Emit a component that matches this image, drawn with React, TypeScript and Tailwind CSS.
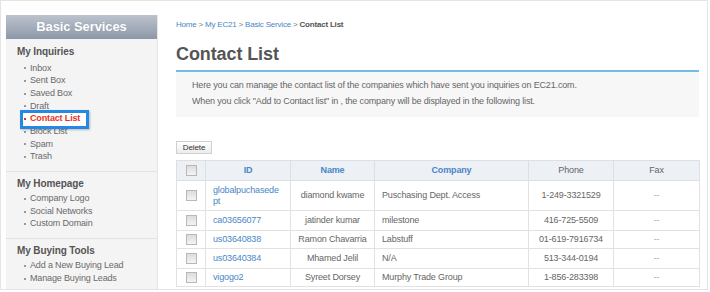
import React from "react";

const Bullet = ({ red }: { red?: boolean }) => (
  <span className={`inline-block w-[2px] h-[2px] mr-[4px] shrink-0 ${red ? "bg-[#e8321e]" : "bg-[#999]"}`} />
);

function Section({
  title,
  items,
  last,
  pt,
  mt,
}: {
  title: string;
  items: string[];
  last?: boolean;
  pt: string;
  mt: string;
}) {
  return (
    <div className={`${pt} pb-[7px] ${last ? "" : "border-b border-[#e2e2e2]"}`}>
      <div className="pl-[11px] text-[10px] leading-[13px] font-bold text-[#555] tracking-[-0.1px]">{title}</div>
      <ul className={mt}>
        {items.map((it) =>
          it === "Contact List" ? (
            <li key={it} className="relative flex items-center pl-[18px] h-[12.7px] text-[9px] tracking-[-0.15px]">
              <span className="absolute left-[14px] top-[-3px] w-[69px] h-[19px] border-[3px] border-[#2589e3] bg-white shadow-[1px_1px_2px_rgba(0,0,0,0.25)]" />
              <span className="relative flex items-center text-[#e8321e] font-bold">
                <Bullet red />
                {it}
              </span>
            </li>
          ) : (
            <li key={it} className="flex items-center pl-[18px] h-[12.7px] text-[9px] text-[#6a6a6a] tracking-[-0.15px]">
              <Bullet />
              {it}
            </li>
          )
        )}
      </ul>
    </div>
  );
}

const Check = () => (
  <span className="inline-block w-[11px] h-[11px] border border-[#b8b8b8] bg-gradient-to-b from-[#dcdcdc] to-[#f4f4f4] align-middle" />
);

const rows = [
  { id: "globalpuchasedept", name: "diamond kwame", company: "Puschasing Dept. Access", phone: "1-249-3321529", h: "h-[30px]" },
  { id: "ca03656077", name: "jatinder kumar", company: "milestone", phone: "416-725-5509", h: "h-[20px]" },
  { id: "us03640838", name: "Ramon Chavarria", company: "Labstuff", phone: "01-619-7916734", h: "h-[18px]" },
  { id: "us03640384", name: "Mhamed Jelil", company: "N/A", phone: "513-344-0194", h: "h-[20px]" },
  { id: "vigogo2", name: "Syreet Dorsey", company: "Murphy Trade Group", phone: "1-856-283398", h: "h-[18px]" },
];

export default function App() {
  return (
    <div className="w-[710px] h-[292px] bg-white font-['Liberation_Sans',Arial,sans-serif] overflow-hidden">
      <div className="w-[708px] h-[290px] border border-[#e4e4e4] flex pl-[5px] pt-[14px]">
        {/* Sidebar */}
        <aside className="w-[152px] shrink-0 bg-[#f4f4f4] border-r border-[#e6e6e6] self-stretch">
          <div className="h-[24px] bg-gradient-to-b from-[#bcc3ce] to-[#8d98a8] flex items-center justify-center">
            <span className="text-white font-bold text-[13px] tracking-[-0.1px] [text-shadow:0_0_1px_rgba(0,0,0,0.15)]">Basic Services</span>
          </div>
          <Section
            title="My Inquiries"
            items={["Inbox", "Sent Box", "Saved Box", "Draft", "Contact List", "Block List", "Spam", "Trash"]}
            pt="pt-[6px]"
            mt="mt-[4px]"
          />
          <Section title="My Homepage" items={["Company Logo", "Social Networks", "Custom Domain"]} pt="pt-[5px]" mt="mt-[3px]" />
          <Section title="My Buying Tools" items={["Add a New Buying Lead", "Manage Buying Leads"]} last pt="pt-[5px]" mt="mt-[3px]" />
        </aside>

        {/* Main */}
        <main className="ml-[18px] w-[523px] -mt-[14px] pt-[18px]">
          <div className="text-[8px] leading-[11px] tracking-[-0.2px]">
            <span className="text-[#4a86c6]">Home</span>
            <span className="text-[#777]"> &gt; </span>
            <span className="text-[#4a86c6]">My EC21</span>
            <span className="text-[#777]"> &gt; </span>
            <span className="text-[#4a86c6]">Basic Service</span>
            <span className="text-[#777]"> &gt; </span>
            <span className="text-[#555] font-bold">Contact List</span>
          </div>
          <h1 className="mt-[13px] text-[18px] leading-[22px] font-bold text-[#555] tracking-[-0.1px]">Contact List</h1>
          <div className="mt-[5px] border-t-2 border-[#72bde4] bg-[#f7f7f7] pl-[16px] pt-[5px] pb-[8px] text-[9px] leading-[16px] text-[#666] tracking-[-0.15px]">
            <p>Here you can manage the contact list of the companies which have sent you inquiries on EC21.com.</p>
            <p>When you click "Add to Contact list" in , the company will be displayed in the following list.</p>
          </div>
          <button className="mt-[24px] h-[13px] w-[36px] border border-[#d0d0d0] bg-gradient-to-b from-[#ffffff] to-[#ececec] text-[8px] leading-[11px] text-[#333] flex items-center justify-center tracking-[-0.1px]">
            Delete
          </button>
          <table className="mt-[6px] w-[523px] table-fixed border-collapse border border-[#d8d8d8] text-[9px] tracking-[-0.15px] text-[#666]">
            <colgroup>
              <col className="w-[29px]" />
              <col className="w-[85px]" />
              <col className="w-[84px]" />
              <col className="w-[154px]" />
              <col className="w-[85px]" />
              <col className="w-[86px]" />
            </colgroup>
            <thead>
              <tr className="h-[20px] bg-[#edf0f5]">
                <th className="border border-[#dcdfe4] p-0 text-center"><Check /></th>
                <th className="border border-[#dcdfe4] font-bold text-[#4a86c6] text-center">ID</th>
                <th className="border border-[#dcdfe4] font-bold text-[#4a86c6] text-center">Name</th>
                <th className="border border-[#dcdfe4] font-bold text-[#4a86c6] text-center">Company</th>
                <th className="border border-[#dcdfe4] font-normal text-[#666] text-center">Phone</th>
                <th className="border border-[#dcdfe4] font-normal text-[#666] text-center">Fax</th>
              </tr>
            </thead>
            <tbody>
              {rows.map((r) => (
                <tr key={r.id} className={r.h}>
                  <td className="border border-[#e2e2e2] p-0 text-center"><Check /></td>
                  <td className="border border-[#e2e2e2] px-[7px] text-[#4a86c6] leading-[11px] break-all">{r.id}</td>
                  <td className="border border-[#e2e2e2] text-center">{r.name}</td>
                  <td className="border border-[#e2e2e2] px-[7px]">{r.company}</td>
                  <td className="border border-[#e2e2e2] text-center">{r.phone}</td>
                  <td className="border border-[#e2e2e2] text-center text-[#aaa]">--</td>
                </tr>
              ))}
            </tbody>
          </table>
        </main>
      </div>
    </div>
  );
}
